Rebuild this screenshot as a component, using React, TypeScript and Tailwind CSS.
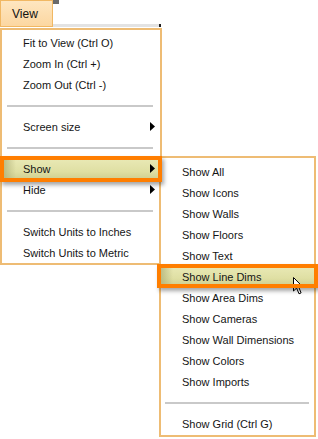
import React from 'react'

type Row = { label?: string; sep?: boolean; arrow?: boolean; hot?: boolean; cursor?: boolean }

const mainRows: Row[] = [
  { label: 'Fit to View (Ctrl O)' },
  { label: 'Zoom In (Ctrl +)' },
  { label: 'Zoom Out (Ctrl -)' },
  { sep: true },
  { label: 'Screen size', arrow: true },
  { sep: true },
  { label: 'Show', arrow: true, hot: true },
  { label: 'Hide', arrow: true },
  { sep: true },
  { label: 'Switch Units to Inches' },
  { label: 'Switch Units to Metric' },
]

const showRows: Row[] = [
  { label: 'Show All' },
  { label: 'Show Icons' },
  { label: 'Show Walls' },
  { label: 'Show Floors' },
  { label: 'Show Text' },
  { label: 'Show Line Dims', hot: true, cursor: true },
  { label: 'Show Area Dims' },
  { label: 'Show Cameras' },
  { label: 'Show Wall Dimensions' },
  { label: 'Show Colors' },
  { label: 'Show Imports' },
  { sep: true },
  { label: 'Show Grid (Ctrl G)' },
]

function Arrow() {
  return (
    <svg width="5" height="9" viewBox="0 0 5 9" className="block">
      <path d="M0 0 L5 4.5 L0 9 Z" fill="#000" />
    </svg>
  )
}

function Cursor() {
  return (
    <svg width="12" height="19" viewBox="0 0 12 19" className="absolute left-[132px] top-[11px] z-[5]">
      <path d="M0.5 0.5 L0.5 14 L3.6 11 L6 16.8 L8.1 15.9 L5.8 10.3 L10.2 10.3 Z" fill="#fff" stroke="#000" strokeWidth="1" strokeLinejoin="round" />
    </svg>
  )
}

function MenuRow({ row, side }: { row: Row; side: 'main' | 'sub' }) {
  if (row.sep) {
    return (
      <div className={side === 'main' ? 'h-[21px] flex items-center pl-[5px] pr-[7px]' : 'h-[21px] flex items-center pl-[4px] pr-[5px]'}>
        <div className="h-[2px] w-full bg-[#c9c9c9]" />
      </div>
    )
  }
  const box =
    side === 'main'
      ? 'absolute -left-[2px] -right-[2px] -top-[2px] -bottom-[3px]'
      : 'absolute -left-[4px] -right-[4px] -top-[2px] -bottom-[1px]'
  return (
    <div className="relative h-[21px] flex items-center justify-between pl-[21px] pr-[5px]">
      {row.hot && (
        <span className={`${box} bg-[linear-gradient(to_bottom,#ebebb9,#dfdfa3_60%,#c9c98a)]`}>
          <span className="absolute left-0 top-0 bottom-0 w-[16px] bg-[linear-gradient(to_right,#b0b078,transparent)]" />
        </span>
      )}
      <span className="relative z-[2] leading-none pt-[1px]">{row.label}</span>
      {row.arrow && (
        <span className="relative z-[2]">
          <Arrow />
        </span>
      )}
      {row.cursor && <Cursor />}
      {row.hot && (
        <span className={`${box} z-[6] border-[4px] border-[#ff7e00] shadow-[2px_3px_4px_rgba(0,0,0,0.35)]`} />
      )}
    </div>
  )
}

export default function App() {
  return (
    <div className="relative w-[318px] h-[439px] overflow-hidden bg-white text-[11px] text-[#151515] font-['Liberation_Sans',Arial,sans-serif]">
      {/* toolbar strip behind the menu */}
      <div className="flex">
        <div className="w-[53px] h-[27px] border border-[#f1b863] bg-[linear-gradient(to_bottom,#fee6c0,#fcd7a1)] flex items-center pl-[11px] text-[12px] text-[#111]">
          View
        </div>
        <div className="flex-1 flex flex-col">
          <div className="w-[6px] h-[4px] bg-[#6a6a6a]" />
          <div className="flex-1" />
          <div className="w-[108px] h-[3px] bg-[#e3e3e3] flex justify-end">
            <div className="w-[2px] h-[3px] bg-[#222]" />
          </div>
        </div>
      </div>

      {/* View menu */}
      <div className="absolute left-0 top-[28px] w-[162px] h-[237px] border-2 border-[#eebc74] bg-white pt-[2px]">
        {mainRows.map((r, i) => (
          <MenuRow key={i} row={r} side="main" />
        ))}
      </div>

      {/* Show submenu */}
      <div className="absolute left-[159px] top-[156px] w-[157px] h-[281px] border-2 border-[#eebc74] bg-white pt-[3px]">
        {showRows.map((r, i) => (
          <MenuRow key={i} row={r} side="sub" />
        ))}
      </div>
    </div>
  )
}
